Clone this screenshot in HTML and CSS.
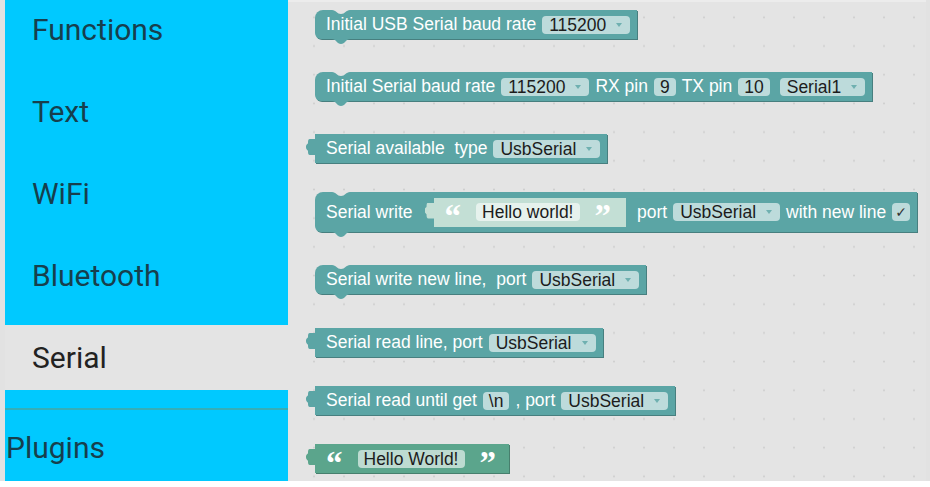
FILE: index.html
```html
<!DOCTYPE html>
<html>
<head>
<meta charset="utf-8">
<title>Serial blocks</title>
<link rel="stylesheet" href="styles.css">
</head>
<body>
<div class="app">
  <nav class="toolbox">
    <ul class="cats">
      <li class="cat">Functions</li>
      <li class="cat">Text</li>
      <li class="cat">WiFi</li>
      <li class="cat">Bluetooth</li>
      <li class="cat cat-selected">Serial</li>
    </ul>
    <div class="toolbox-sep"></div>
    <div class="cat cat-plugins">Plugins</div>
  </nav>

  <main class="workspace">
    <div class="block stmt">
      <span class="label">Initial USB Serial baud rate</span>
      <span class="field dropdown">115200<i class="arrow"></i></span>
    </div>

    <div class="block stmt gap-33">
      <span class="label">Initial Serial baud rate</span>
      <span class="field dropdown">115200<i class="arrow"></i></span>
      <span class="label">RX pin</span>
      <span class="field">9</span>
      <span class="label">TX pin</span>
      <span class="field">10</span>
      <span class="field dropdown wide-gap">Serial1<i class="arrow"></i></span>
    </div>

    <div class="block value gap-33">
      <span class="label">Serial available&nbsp; type</span>
      <span class="field dropdown">UsbSerial<i class="arrow"></i></span>
    </div>

    <div class="block stmt tall gap-29">
      <span class="label">Serial write</span>
      <span class="block value text-block inner">
        <span class="quote">“</span>
        <span class="field field-pale">Hello world!</span>
        <span class="quote">”</span>
      </span>
      <span class="label">port</span>
      <span class="field dropdown">UsbSerial<i class="arrow"></i></span>
      <span class="label">with new line</span>
      <span class="check">✓</span>
    </div>

    <div class="block stmt gap-33">
      <span class="label">Serial write new line,&nbsp; port</span>
      <span class="field dropdown">UsbSerial<i class="arrow"></i></span>
    </div>

    <div class="block value gap-34">
      <span class="label">Serial read line, port</span>
      <span class="field dropdown">UsbSerial<i class="arrow"></i></span>
    </div>

    <div class="block value gap-29">
      <span class="label">Serial read until get</span>
      <span class="field">\n</span>
      <span class="label">, port</span>
      <span class="field dropdown">UsbSerial<i class="arrow"></i></span>
    </div>

    <div class="block value text-block green gap-29">
      <span class="quote">“</span>
      <span class="field">Hello World!</span>
      <span class="quote">”</span>
    </div>
  </main>
</div>
</body>
</html>
```

FILE: styles.css
```css
* { box-sizing: border-box; }

html, body {
  margin: 0;
  padding: 0;
}

body {
  width: 930px;
  height: 487px;
  overflow: hidden;
  background: #ffffff;
  font-family: "Liberation Sans", Arial, sans-serif;
}

.app {
  display: flex;
  height: 481px;
  background: #e2e2e2;
}

/* ---------- toolbox ---------- */
.toolbox {
  width: 283px;
  margin-left: 5px;
  background: #00c9ff;
  display: flex;
  flex-direction: column;
  overflow: hidden;
}

.toolbox > * {
  flex-shrink: 0;
}

.cats {
  list-style: none;
  margin: -3px 0 0;
  padding: 0;
  display: flex;
  flex-direction: column;
  gap: 17px;
}

.cat {
  flex-shrink: 0;
  height: 65px;
  line-height: 65px;
  padding-left: 27px;
  font-family: Roboto, "Noto Sans", sans-serif;
  font-size: 30px;
  color: #173f4d;
}

.cat-selected {
  background: #e4e4e4;
  color: #222222;
}

.toolbox-sep {
  margin-top: 18px;
  height: 2px;
  background: #36aeb8;
}

.cat-plugins {
  height: 76px;
  line-height: 76px;
  padding-left: 1px;
}

/* ---------- workspace ---------- */
.workspace {
  flex: 1;
  margin-right: 4px;
  border-top: 2px solid #ececec;
  background-color: #e4e4e4;
  background-image: radial-gradient(circle at center, #cfcfcf 0 0.9px, transparent 1.2px);
  background-size: 30px 28.7px;
  background-position: 11px 1px;
  display: flex;
  flex-direction: column;
  align-items: flex-start;
  padding: 8px 0 0 27px;
}

.gap-29 { margin-top: 29px; }
.gap-33 { margin-top: 33px; }
.gap-34 { margin-top: 34px; }

/* ---------- blocks ---------- */
.block {
  position: relative;
  display: flex;
  align-items: center;
  gap: 6px;
  height: 29px;
  padding: 0 7px 0 11px;
  background: #5ba5a5;
  color: #ffffff;
  font-size: 17.5px;
  white-space: nowrap;
  box-shadow: 1px 1px 0 #477f7f;
}

.stmt {
  border-radius: 8px 0 0 6px;
}

.tall {
  height: 40px;
}

/* previous-connection notch */
.stmt::before {
  content: "";
  position: absolute;
  top: 0;
  left: 17px;
  width: 18px;
  height: 4px;
  background: #e4e4e4;
  clip-path: path("M0 0 C4 0 5 4 9 4 C13 4 14 0 18 0 Z");
}

/* next-connection tab */
.stmt::after {
  content: "";
  position: absolute;
  top: 100%;
  left: 17px;
  width: 18px;
  height: 5px;
  background: inherit;
  clip-path: path("M0 0 C4 0 5 5 9 5 C13 5 14 0 18 0 Z");
}

/* output puzzle tab */
.value::before {
  content: "";
  position: absolute;
  left: -9px;
  top: 5px;
  width: 10px;
  height: 16px;
  background: inherit;
  clip-path: path("M10 0 L4 0 C2 0 2 2 2 4 C2 5 0 5 0 8 C0 11 2 11 2 12 C2 14 2 16 4 16 L10 16 Z");
}

.label {
  line-height: 29px;
}

.field {
  display: inline-flex;
  align-items: center;
  height: 18px;
  line-height: 18px;
  padding: 0 6px;
  border-radius: 4px;
  background: #bddbdb;
  color: #1c1c1c;
}

.dropdown {
  padding: 0 8px 0 7px;
}

.wide-gap {
  margin-left: 4px;
}

.arrow {
  display: inline-block;
  width: 0;
  height: 0;
  margin-left: 10px;
  border-left: 3.5px solid transparent;
  border-right: 3.5px solid transparent;
  border-top: 4.5px solid #6fb0b0;
}

.check {
  display: inline-flex;
  align-items: center;
  justify-content: center;
  width: 18px;
  height: 18px;
  border-radius: 4px;
  background: #bddbdb;
  color: #333333;
  font-family: "DejaVu Sans", sans-serif;
  font-size: 14px;
}

/* text (string) blocks */
.text-block {
  gap: 15px;
  padding: 0 13px 0 11px;
}

.quote {
  margin-top: 9px;
  font-family: "Liberation Serif", serif;
  font-weight: bold;
  font-size: 33px;
  line-height: 29px;
  height: 29px;
  color: #ffffff;
}

.green {
  background: #5ba58c;
  box-shadow: 1px 1px 0 #477f6d;
}

.green .field {
  background: #bddbd1;
}

.inner {
  background: #c3dfd5;
  box-shadow: none;
  margin-left: 15px;
  margin-right: 5px;
  padding-right: 15px;
}

.field-pale {
  background: #e6f2ed;
}
```
